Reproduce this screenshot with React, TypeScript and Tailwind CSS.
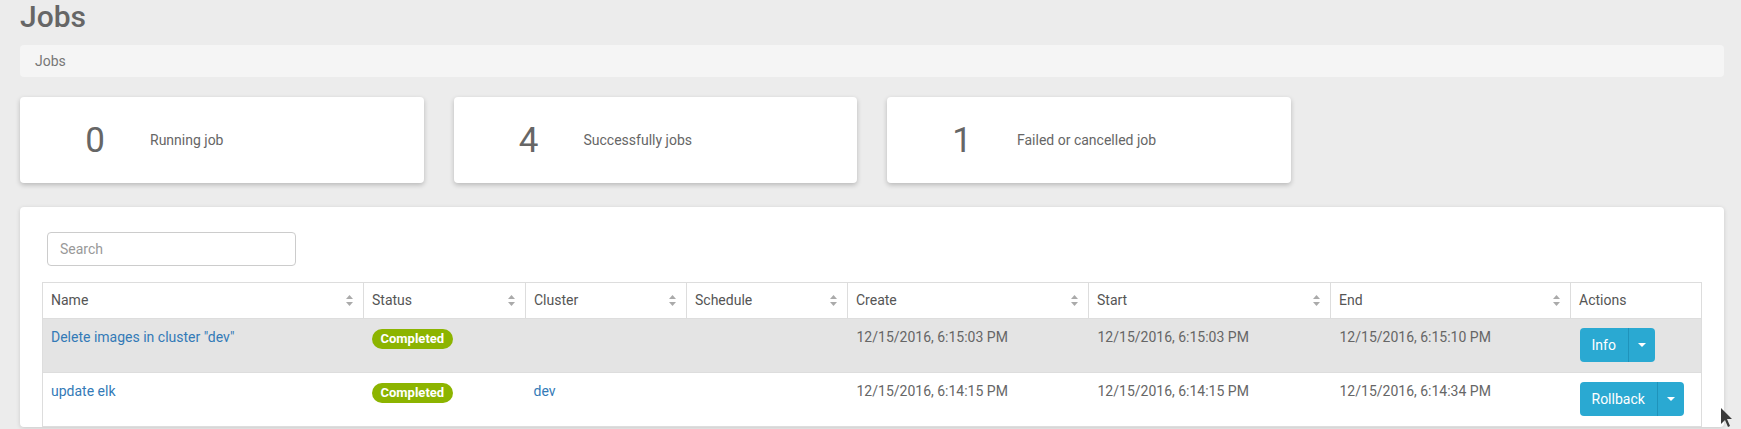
import React from "react";

interface Job {
  name: string;
  cluster: string;
  create: string;
  start: string;
  end: string;
  action: string;
}

const jobs: Job[] = [
  {
    name: 'Delete images in cluster "dev"',
    cluster: "",
    create: "12/15/2016, 6:15:03 PM",
    start: "12/15/2016, 6:15:03 PM",
    end: "12/15/2016, 6:15:10 PM",
    action: "Info",
  },
  {
    name: "update elk",
    cluster: "dev",
    create: "12/15/2016, 6:14:15 PM",
    start: "12/15/2016, 6:14:15 PM",
    end: "12/15/2016, 6:14:34 PM",
    action: "Rollback",
  },
];

const stats = [
  { count: 0, label: "Running job" },
  { count: 4, label: "Successfully jobs" },
  { count: 1, label: "Failed or cancelled job" },
];

const columns = [
  { title: "Name", width: "w-[321px]", sort: true },
  { title: "Status", width: "w-[162px]", sort: true },
  { title: "Cluster", width: "w-[161px]", sort: true },
  { title: "Schedule", width: "w-[161px]", sort: true },
  { title: "Create", width: "w-[241px]", sort: true },
  { title: "Start", width: "w-[242px]", sort: true },
  { title: "End", width: "w-[240px]", sort: true },
  { title: "Actions", width: "w-[131px]", sort: false },
];

function SortIcon() {
  return (
    <svg width="7" height="11" viewBox="0 0 7 11" className="shrink-0">
      <path d="M3.5 0 L7 4 L0 4 Z" fill="#aaa" />
      <path d="M0 7 L7 7 L3.5 11 Z" fill="#aaa" />
    </svg>
  );
}

function Caret() {
  return (
    <svg width="8" height="4" viewBox="0 0 8 4">
      <path d="M0 0 L8 0 L4 4 Z" fill="#fff" />
    </svg>
  );
}

export default function App() {
  return (
    <main className="relative min-h-screen overflow-hidden bg-[#ececec] pl-5 pr-[17px] font-['Roboto',sans-serif] text-[14px] text-[#666]">
      {/* Title */}
      <h1 className="text-[30px] font-medium leading-[34px] text-[#666]">Jobs</h1>

      {/* Breadcrumb */}
      <div className="mt-[11px] flex h-8 items-center rounded bg-[#f5f5f5] pl-[15px] text-[#777]">
        Jobs
      </div>

      {/* Stats */}
      <div className="mt-5 grid grid-cols-4 gap-[30px]">
        {stats.map((s) => (
          <div
            key={s.label}
            className="flex h-[86px] items-center rounded bg-white shadow-[0_2px_5px_rgba(0,0,0,0.22)]"
          >
            <div className="ml-5 w-[110px] text-center text-[35px] leading-none text-[#666]">
              {s.count}
            </div>
            <div className="text-[14px] text-[#666]">{s.label}</div>
          </div>
        ))}
      </div>

      {/* Table panel */}
      <div className="mt-6 rounded bg-white pl-[22px] pr-[23px] pt-[25px] shadow-[0_1px_4px_rgba(0,0,0,0.15)]">
        <input
          type="text"
          placeholder="Search"
          className="ml-[5px] block h-[34px] w-[249px] rounded border border-[#ccc] px-3 text-[14px] text-[#555] outline-none placeholder:text-[#999]"
        />

        <table className="mt-4 w-full table-fixed border-collapse border border-[#ddd]">
          <thead>
            <tr className="h-[36px]">
              {columns.map((c) => (
                <th
                  key={c.title}
                  className={`${c.width} border border-[#ddd] pl-2 pr-[10px] text-left font-normal text-[#555]`}
                >
                  <div className="flex items-center justify-between">
                    <span>{c.title}</span>
                    {c.sort && <SortIcon />}
                  </div>
                </th>
              ))}
            </tr>
          </thead>
          <tbody>
            {jobs.map((j, i) => (
              <tr key={j.name} className={i === 0 ? "bg-[#e4e4e4]" : "bg-white"}>
                <td className="h-[54px] border-y border-[#ddd] px-2 pt-2 align-top leading-5">
                  <a className="text-[#337ab7]">{j.name}</a>
                </td>
                <td className="border-y border-[#ddd] px-2 pt-[9px] align-top">
                  <span className="inline-flex h-5 items-center rounded-full bg-[#8cb400] px-[9px] text-[13px] font-bold text-white">
                    Completed
                  </span>
                </td>
                <td className="border-y border-[#ddd] px-2 pt-2 align-top leading-5">
                  <a className="text-[#337ab7]">{j.cluster}</a>
                </td>
                <td className="border-y border-[#ddd] px-2 pt-2 align-top leading-5"></td>
                <td className="border-y border-[#ddd] px-[9px] pt-2 align-top leading-5">{j.create}</td>
                <td className="border-y border-[#ddd] px-[9px] pt-2 align-top leading-5">{j.start}</td>
                <td className="border-y border-[#ddd] px-[9px] pt-2 align-top leading-5">{j.end}</td>
                <td className="border-y border-[#ddd] px-[9px] pt-[9px] align-top">
                  <div className="inline-flex h-[34px] overflow-hidden rounded bg-[#2aa9d2] text-[14px] text-white">
                    <span className="flex items-center px-3">{j.action}</span>
                    <span className="flex w-[27px] items-center justify-center border-l border-[#1f93bb]">
                      <Caret />
                    </span>
                  </div>
                </td>
              </tr>
            ))}
          </tbody>
        </table>
      </div>

      {/* mouse pointer */}
      <svg
        width="14"
        height="22"
        viewBox="0 0 14 22"
        className="absolute left-[1720px] top-[407px]"
      >
        <path d="M1 1 L1 17 L5 13 L8 20 L10 19 L7 12 L12 12 Z" fill="#3a3a3a" />
      </svg>
    </main>
  );
}
